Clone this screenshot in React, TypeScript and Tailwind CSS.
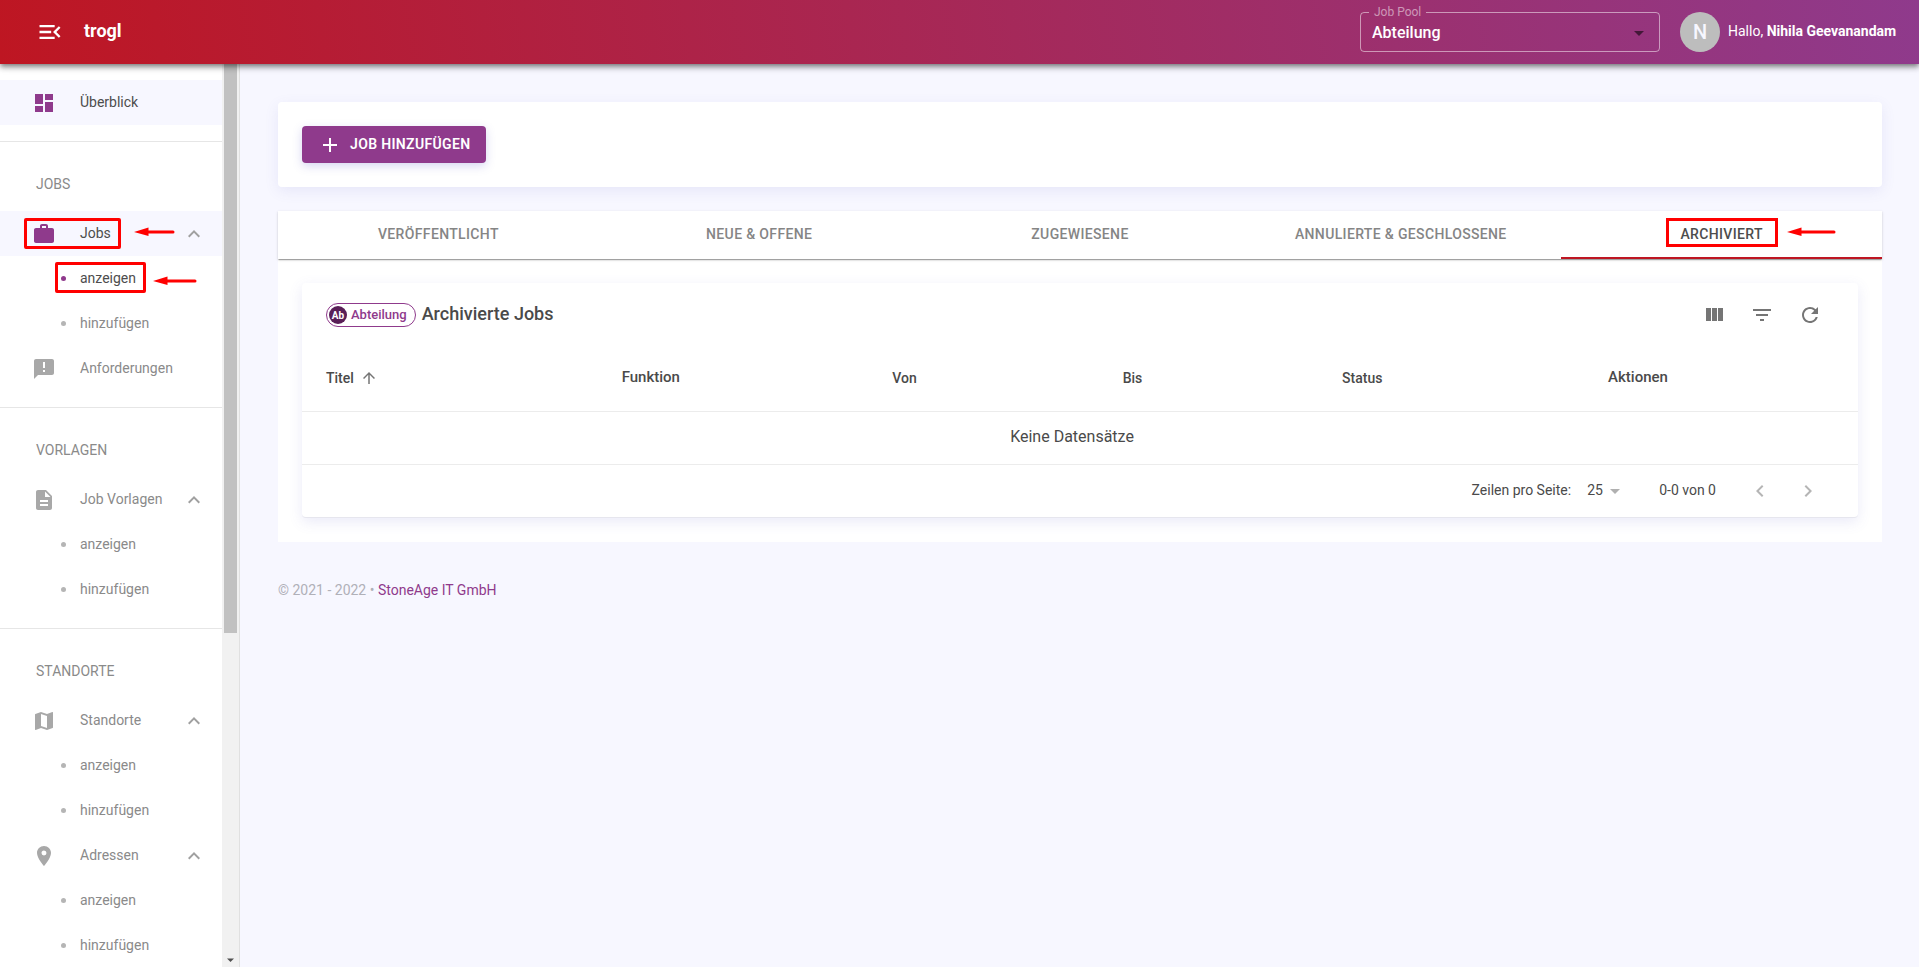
import React from "react";
import {
  MdAdd,
  MdArrowDropDown,
  MdArrowUpward,
  MdChevronLeft,
  MdChevronRight,
  MdDashboard,
  MdDescription,
  MdExpandLess,
  MdFilterList,
  MdLocationOn,
  MdMap,
  MdMenuOpen,
  MdRefresh,
  MdWork,
} from "react-icons/md";

type IconComponent = React.ComponentType<{ className?: string }>;
type Child = { label: string; active?: boolean };
type Item = { label: string; icon: IconComponent; active?: boolean; children?: Child[] };
type Section = { title?: string; items: Item[] };

function AnnouncementIcon({ className }: { className?: string }) {
  return (
    <svg viewBox="0 0 24 24" className={className} fill="currentColor" aria-hidden="true">
      <path d="M20 2H4c-1.1 0-1.99.9-1.99 2L2 22l4-4h14c1.1 0 2-.9 2-2V4c0-1.1-.9-2-2-2zm-7 9h-2V5h2v6zm0 4h-2v-2h2v2z" />
    </svg>
  );
}

const pair: Child[] = [{ label: "anzeigen" }, { label: "hinzufügen" }];

const sections: Section[] = [
  { items: [{ label: "Überblick", icon: MdDashboard, active: true }] },
  {
    title: "JOBS",
    items: [
      {
        label: "Jobs",
        icon: MdWork,
        active: true,
        children: [{ label: "anzeigen", active: true }, { label: "hinzufügen" }],
      },
      { label: "Anforderungen", icon: AnnouncementIcon },
    ],
  },
  { title: "VORLAGEN", items: [{ label: "Job Vorlagen", icon: MdDescription, children: pair }] },
  {
    title: "STANDORTE",
    items: [
      { label: "Standorte", icon: MdMap, children: pair },
      { label: "Adressen", icon: MdLocationOn, children: pair },
    ],
  },
];

const tabs = ["VERÖFFENTLICHT", "NEUE & OFFENE", "ZUGEWIESENE", "ANNULIERTE & GESCHLOSSENE", "ARCHIVIERT"];

function Arrow({ className, length }: { className: string; length: number }) {
  return (
    <svg
      viewBox={`0 0 ${length} 10`}
      width={length}
      height={10}
      className={"pointer-events-none absolute " + className}
      aria-hidden="true"
    >
      <path d="M0 5 14.500 .5v8.500z" fill="#ff0000" />
      <path d={`M12 5H${length - 2}`} stroke="#ff0000" strokeWidth="3" strokeLinecap="round" />
    </svg>
  );
}

function Header() {
  return (
    <header className="relative z-10 flex h-16 shrink-0 items-center bg-[linear-gradient(80deg,#be1622,#8f3a8c)] pr-[19px] pl-9 text-white shadow-[0_2px_4px_-1px_rgba(0,0,0,0.3),0_4px_5px_rgba(0,0,0,0.24),0_1px_10px_rgba(0,0,0,0.16)]">
      <button type="button" aria-label="Menü">
        <MdMenuOpen className="size-7" />
      </button>
      <span className="ml-5 pb-0.5 text-lg font-bold">trogl</span>
      <div className="ml-auto flex items-center">
        <fieldset className="-mt-2 h-12 w-[300px] rounded border border-white/50 pl-2">
          <legend className="px-[5px] text-xs leading-4 text-white/50">
            <label htmlFor="pool">Job Pool</label>
          </legend>
          <div className="relative flex h-[30px] items-center pb-1">
            <select id="pool" className="w-full appearance-none bg-transparent pl-[3px] text-base font-medium text-white outline-none">
              <option>Abteilung</option>
            </select>
            <MdArrowDropDown className="pointer-events-none absolute right-2 size-6 text-black/55" />
          </div>
        </fieldset>
        <div className="ml-5 flex size-10 items-center justify-center rounded-full bg-[#bdbdbd] text-xl font-medium text-[#f7f7ff]">N</div>
        <p className="ml-2 min-w-[172px] pb-0.5 text-sm">
          Hallo, <strong className="font-bold">Nihila Geevanandam</strong>
        </p>
      </div>
    </header>
  );
}

function NavItem({ item }: { item: Item }) {
  const Icon = item.icon;
  return (
    <li>
      <a
        href="#"
        className={
          "relative flex h-[45px] items-center pr-4 pl-8 " +
          (item.active ? "bg-[#f7f7ff] text-[#4d4d4d]" : "text-[#8a8a8a]")
        }
      >
        <Icon className={"size-6 shrink-0 " + (item.active ? "text-[#8f3a8c]" : "text-[#a8a8a8]")} />
        <span className="ml-6 grow pb-0.5">{item.label}</span>
        {item.children && <MdExpandLess className="size-6 shrink-0 text-[#a0a0a0]" />}
        {item.label === "Jobs" && (
          <>
            <span className="absolute top-[7px] left-6 h-[31px] w-[97px] rounded-xs border-3 border-[#ff0000]" />
            <Arrow className="top-[16px] left-[134px]" length={41} />
          </>
        )}
      </a>
      {item.children && (
        <ul>
          {item.children.map((c) => (
            <li key={c.label}>
              <a
                href="#"
                className={"relative flex h-[45px] items-center pl-[61px] " + (c.active ? "text-[#4d4d4d]" : "text-[#8a8a8a]")}
              >
                <span className={"size-[5px] rounded-full " + (c.active ? "bg-[#8f3a8c]" : "bg-[#b5b5b5]")} />
                <span className="ml-3.5 pb-0.5">{c.label}</span>
                {c.active && (
                  <>
                    <span className="absolute top-[6px] left-[55px] h-[31px] w-[91px] rounded-xs border-3 border-[#ff0000]" />
                    <Arrow className="top-[20px] left-[153px]" length={44} />
                  </>
                )}
              </a>
            </li>
          ))}
        </ul>
      )}
    </li>
  );
}

function Sidebar() {
  return (
    <aside className="flex w-60 shrink-0 border-r border-[#e0e0e0] bg-white">
      <nav className="min-w-0 grow overflow-hidden text-sm">
        {sections.map((s, i) => (
          <section key={i} className={i > 0 ? "border-t border-[#e6e6e6] py-4" : "py-4"}>
            {s.title && <h2 className="flex h-[53px] items-center pb-0.5 pl-9 text-[#8a8a8a]">{s.title}</h2>}
            <ul>
              {s.items.map((it) => (
                <NavItem key={it.label} item={it} />
              ))}
            </ul>
          </section>
        ))}
      </nav>
      <div className="flex w-[17px] shrink-0 flex-col justify-between bg-[#f1f1f1] px-0.5" aria-hidden="true">
        <div className="h-[63%] bg-[#c1c1c1]" />
        <svg viewBox="0 0 13 13" className="size-[13px]">
          <path d="M3 4.500h7L6.500 8z" fill="#505050" />
        </svg>
      </div>
    </aside>
  );
}

function ColumnsIcon() {
  return (
    <svg viewBox="0 0 24 24" className="size-6" fill="currentColor" aria-hidden="true">
      <path d="M10 18h5V5h-5v13zm-6 0h5V5H4v13zM16 5v13h5V5h-5z" />
    </svg>
  );
}

function JobsTable() {
  return (
    <div className="rounded border-b border-[#e6e6ee] bg-white text-[#4a4a4a] shadow-[0_4px_14px_rgba(90,90,200,0.13)]">
      <div className="flex h-16 items-center px-6">
        <span className="flex h-6 items-center rounded-full border border-[#8f3a8c] pr-2 pl-0.5 text-[13px] font-medium text-[#8f3a8c]">
          <span className="mr-1 flex size-[18px] items-center justify-center rounded-full bg-[#591f57] text-[10px] font-bold text-white">Ab</span>
          Abteilung
        </span>
        <h1 className="ml-1.5 pb-0.5 text-lg font-medium">Archivierte Jobs</h1>
        <div className="ml-auto flex text-[#757575]">
          <button type="button" aria-label="Spalten" className="flex size-12 items-center justify-center">
            <ColumnsIcon />
          </button>
          <button type="button" aria-label="Filter" className="flex size-12 items-center justify-center">
            <MdFilterList className="size-6" />
          </button>
          <button type="button" aria-label="Aktualisieren" className="flex size-12 items-center justify-center">
            <MdRefresh className="size-6" />
          </button>
        </div>
      </div>
      <table className="w-full table-fixed border-separate border-spacing-0 text-left">
        <thead>
          <tr className="h-[65px] text-sm *:border-b *:border-[#ececec] *:pb-0.5 *:pl-6 *:font-medium">
            <th className="w-[19%]">
              <button type="button" className="flex items-center gap-1.5">
                Titel <MdArrowUpward className="size-[18px] text-[#757575]" />
              </button>
            </th>
            <th className="w-[17.4%] text-[15px]">Funktion</th>
            <th className="w-[14.8%]">Von</th>
            <th className="w-[14.1%]">Bis</th>
            <th className="w-[17.1%]">Status</th>
            <th className="text-[15px]">Aktionen</th>
          </tr>
        </thead>
        <tbody>
          <tr className="h-[53px]">
            <td colSpan={6} className="border-b border-[#ececec] pr-4 pb-0.5 text-center">
              Keine Datensätze
            </td>
          </tr>
        </tbody>
      </table>
      <div className="flex h-[52px] items-center justify-end pr-[26px] text-sm">
        <label htmlFor="rows" className="pb-0.5">
          Zeilen pro Seite:
        </label>
        <div className="relative ml-4 flex items-center">
          <select id="rows" defaultValue="25" className="w-10 appearance-none bg-transparent pb-0.5 outline-none">
            <option>25</option>
          </select>
          <MdArrowDropDown className="pointer-events-none absolute right-0 size-6 text-[#b0b0b0]" />
        </div>
        <span className="ml-8 pb-0.5">0-0 von 0</span>
        <div className="ml-5 flex text-[#b5b5b5]">
          <button type="button" aria-label="Vorherige Seite" className="flex size-12 items-center justify-center">
            <MdChevronLeft className="size-6" />
          </button>
          <button type="button" aria-label="Nächste Seite" className="flex size-12 items-center justify-center">
            <MdChevronRight className="size-6" />
          </button>
        </div>
      </div>
    </div>
  );
}

export default function App() {
  return (
    <div className="flex h-screen flex-col bg-[#f7f7ff] font-['Roboto',sans-serif]">
      <Header />
      <div className="flex min-h-0 grow">
        <Sidebar />
        <main className="min-w-0 grow overflow-hidden pt-[38px] pr-[37px] pl-[38px]">
          <div className="rounded bg-white p-6 shadow-[0_4px_14px_rgba(90,90,200,0.1)]">
            <button
              type="button"
              className="flex h-[37px] items-center rounded bg-[#8f3a8c] px-4 text-sm font-semibold tracking-wide text-white shadow-[0_3px_10px_rgba(90,90,200,0.25)]"
            >
              <MdAdd className="mr-2 size-6" />
              <span className="pb-0.5">JOB HINZUFÜGEN</span>
            </button>
          </div>
          <div className="mt-6 bg-white">
            <div
              role="tablist"
              className="grid h-12 grid-cols-5 shadow-[0_2px_1px_-1px_rgba(0,0,0,0.2),0_1px_1px_rgba(0,0,0,0.14),0_1px_3px_rgba(0,0,0,0.12)]"
            >
              {tabs.map((t, i) => (
                <button
                  key={t}
                  type="button"
                  role="tab"
                  aria-selected={i === 4}
                  className={
                    "relative border-b-2 text-sm font-medium tracking-wide " +
                    (i === 4 ? "border-[#be1622] text-[#4d4d4d]" : "border-transparent text-[#858585]")
                  }
                >
                  {t}
                  {i === 4 && (
                    <>
                      <span className="absolute top-[7px] left-1/2 h-[29px] w-28 -translate-x-1/2 border-3 border-[#ff0000]" />
                      <Arrow className="top-4 left-[226px]" length={49} />
                    </>
                  )}
                </button>
              ))}
            </div>
            <div className="p-6">
              <JobsTable />
            </div>
          </div>
          <footer className="mt-[38px] text-sm text-[#b0b0b8]">
            © 2021 - 2022 •{" "}
            <a href="#" className="text-[#8f3a8c]">
              StoneAge IT GmbH
            </a>
          </footer>
        </main>
      </div>
    </div>
  );
}
